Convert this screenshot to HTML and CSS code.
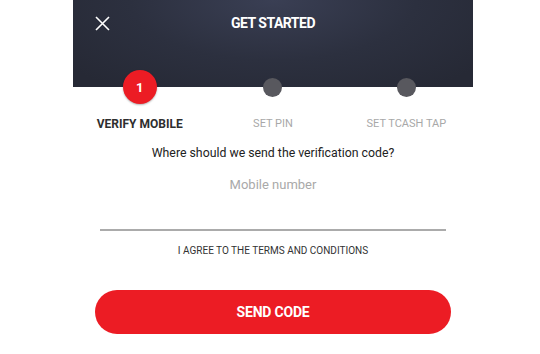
FILE: index.html
```html
<!DOCTYPE html>
<html>
<head>
<meta charset="utf-8">
<link rel="stylesheet" href="styles.css">
</head>
<body>
<div class="screen">
  <header class="header">
    <button class="close" aria-label="Close">
      <svg width="15" height="15" viewBox="0 0 15 15"><path d="M1 1L14 14M14 1L1 14" stroke="#fff" stroke-width="1.6" fill="none"/></svg>
    </button>
    <h1 class="title">GET STARTED</h1>
    <span></span>
  </header>
  <div class="steps">
    <div class="step">
      <div class="dot-row"><span class="dot active">1</span></div>
      <div class="label current">VERIFY MOBILE</div>
    </div>
    <div class="step">
      <div class="dot-row"><span class="dot"></span></div>
      <div class="label">SET PIN</div>
    </div>
    <div class="step">
      <div class="dot-row"><span class="dot"></span></div>
      <div class="label">SET TCASH TAP</div>
    </div>
  </div>
  <p class="question">Where should we send the verification code?</p>
  <div class="field"><span class="placeholder">Mobile number</span></div>
  <p class="terms">I AGREE TO THE TERMS AND CONDITIONS</p>
  <div class="actions"><button class="send">SEND CODE</button></div>
</div>
</body>
</html>
```
FILE: styles.css
```css
* { box-sizing: border-box; }
html, body { margin: 0; padding: 0; background: #fff; }
body { font-family: Roboto, "Liberation Sans", Arial, sans-serif; }
.screen { width: 400px; margin-left: 73px; }
.header {
  height: 87px;
  background: radial-gradient(ellipse 260px 110px at 50% 0%, #3a3f54 0%, #2c303f 55%, #262935 100%);
  display: grid;
  grid-template-columns: 1fr auto 1fr;
  align-items: center;
  align-content: start;
  padding: 15px 0 0 22px;
}
.close { background: none; border: 0; padding: 0; width: 15px; height: 15px; display: block; justify-self: start; }
.close svg { display: block; }
.title { margin: 0 0 0 -22px; color: #fff; font-size: 14px; line-height: 16px; font-weight: 700; letter-spacing: -0.5px; }
.steps { display: grid; grid-template-columns: repeat(3, 1fr); margin-top: -17px; }
.step { display: flex; flex-direction: column; align-items: center; }
.dot-row { height: 34px; display: flex; align-items: center; justify-content: center; }
.dot { width: 19px; height: 19px; border-radius: 50%; background: #58585e; display: block; }
.dot.active { width: 34px; height: 34px; background: #ec1c24; color: #fff; font-size: 13px; font-weight: 700; display: flex; align-items: center; justify-content: center; box-shadow: 0 1px 2px rgba(0,0,0,0.3); }
.label { margin-top: 13px; font-size: 11px; line-height: 14px; color: #a8a8a8; }
.label.current { color: #2e2e2e; font-weight: 700; font-size: 12px; }
.question { margin: 14px 0 0; text-align: center; font-size: 12.3px; line-height: 16px; color: #222; }
.field { margin: 16px 27px 0; padding-bottom: 36px; border-bottom: 2px solid #ababab; text-align: center; }
.placeholder { font-size: 13px; line-height: 16px; color: #a9a9a9; display: block; }
.terms { margin: 14px 0 0; text-align: center; font-size: 10px; line-height: 12px; color: #333; }
.actions { margin-top: 33px; padding: 0 22px; }
.send { display: block; width: 100%; height: 44px; border: 0; border-radius: 22px; background: #ec1c24; color: #fff; font-family: Roboto, "Liberation Sans", Arial, sans-serif; font-size: 14px; font-weight: 700; letter-spacing: -0.2px; }
```
